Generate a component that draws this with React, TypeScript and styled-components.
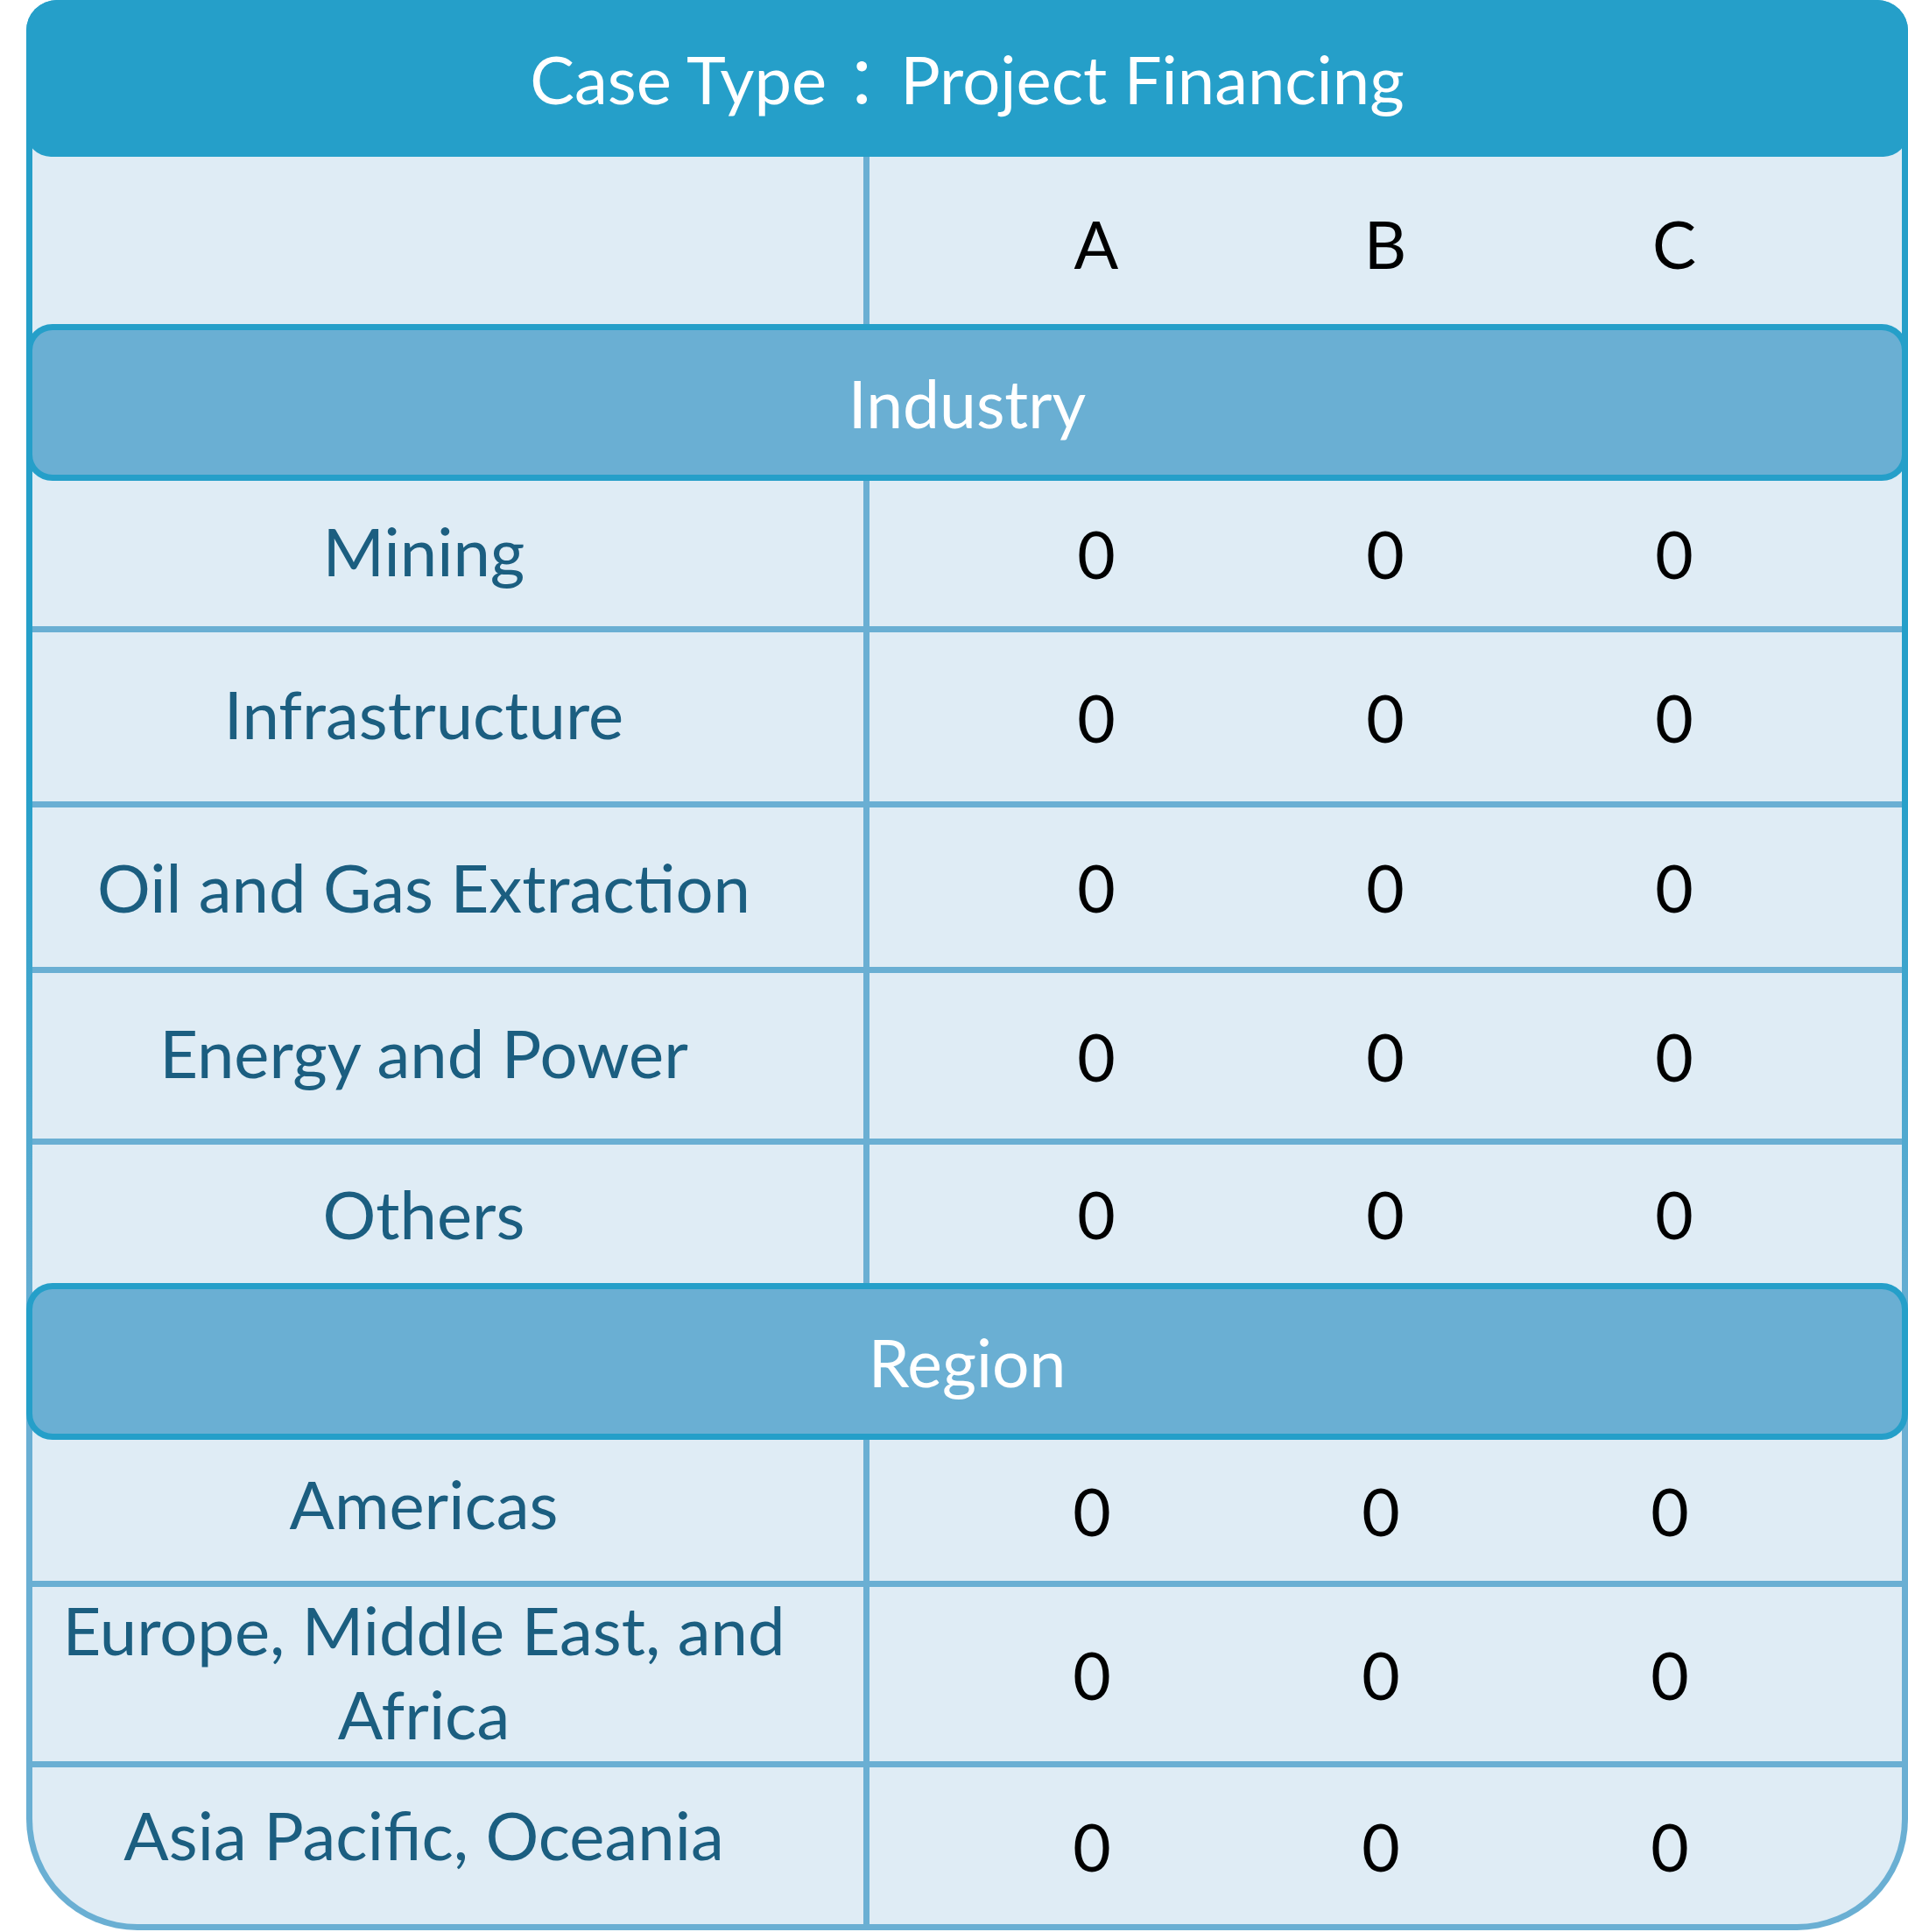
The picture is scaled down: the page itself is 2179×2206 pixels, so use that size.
import React from "react";
import styled, { createGlobalStyle } from "styled-components";

const GlobalStyle = createGlobalStyle`
  html, body {
    margin: 0;
    padding: 0;
    background: #ffffff;
  }
  body {
    font-family: Lato, "Noto Sans CJK SC", "Noto Sans", sans-serif;
  }
  * { box-sizing: border-box; }
`;

const Card = styled.div`
  margin-left: 30px;
  width: 2149px;
  border: 7px solid transparent;
  border-radius: 35px 35px 127px 127px;
  background:
    linear-gradient(#dfecf5, #dfecf5) padding-box,
    linear-gradient(to bottom, #259fc9 0%, #259fc9 40%, #6aafd3 70%, #6aafd3 100%) border-box;
`;

const Header = styled.div`
  margin: -7px -7px 0;
  height: 179px;
  background: #259fc9;
  border-radius: 35px 35px 28px 28px;
  display: flex;
  align-items: center;
  justify-content: center;
  color: #ffffff;
  font-size: 76px;
  white-space: pre;
  position: relative;
  z-index: 1;
`;

const Colon = styled.span`
  font-family: "Noto Sans CJK JP", "Noto Sans CJK SC", sans-serif;
  margin: 0 6px 0 2px;
`;

const Band = styled.div`
  margin: 0 -7px;
  height: 179px;
  border: 7px solid #259fc9;
  border-radius: 30px;
  background: #6aafd3;
  display: flex;
  align-items: center;
  justify-content: center;
  color: #ffffff;
  font-size: 75px;
`;

const Row = styled.div<{ $h: number; $line?: boolean }>`
  display: grid;
  grid-template-columns: 956px 1fr;
  height: ${(p) => p.$h + (p.$line ? 7 : 0)}px;
  border-bottom: ${(p) => (p.$line ? "7px solid #6aafd3" : "none")};
`;

const LabelCell = styled.div<{ $lift?: number }>`
  border-right: 7px solid #6aafd3;
  display: flex;
  align-items: center;
  justify-content: center;
  text-align: center;
  padding: 0 75px ${(p) => 2 * (p.$lift ?? 0)}px 20px;
  color: #1b5e80;
  font-size: 76px;
  line-height: 96px;
`;

const Values = styled.div<{ $shift?: number; $top?: number }>`
  display: grid;
  grid-template-columns: repeat(3, 330px);
  padding-left: ${(p) => 94 - (p.$shift ?? 0)}px;
  padding-top: ${(p) => p.$top ?? 0}px;
  align-items: center;
  justify-items: center;
  color: #000000;
  font-size: 75px;
`;

type Item = { label: string; h: number; line: boolean; lift: number };

const industry: Item[] = [
  { label: "Mining", h: 166, line: true, lift: 3 },
  { label: "Infrastructure", h: 193, line: true, lift: 4 },
  { label: "Oil and Gas Extraction", h: 182, line: true, lift: 0 },
  { label: "Energy and Power", h: 189, line: true, lift: 4 },
  { label: "Others", h: 158, line: false, lift: 0 },
];

const region: Item[] = [
  { label: "Americas", h: 161, line: true, lift: 8 },
  { label: "Europe, Middle East, and Africa", h: 199, line: true, lift: 3 },
  { label: "Asia Pacific, Oceania", h: 179, line: false, lift: 13 },
];

const DataRow: React.FC<{ item: Item; shift?: number }> = ({ item, shift }) => (
  <Row $h={item.h} $line={item.line}>
    <LabelCell $lift={item.lift}>{item.label}</LabelCell>
    <Values $shift={shift}>
      <span>0</span>
      <span>0</span>
      <span>0</span>
    </Values>
  </Row>
);

export default function App() {
  return (
    <>
      <GlobalStyle />
      <Card>
        <Header>
          Case Type<Colon>：</Colon>Project Financing
        </Header>
        <Row $h={191}>
          <LabelCell />
          <Values $top={6}>
            <span>A</span>
            <span>B</span>
            <span>C</span>
          </Values>
        </Row>
        <Band>Industry</Band>
        {industry.map((it) => (
          <DataRow key={it.label} item={it} />
        ))}
        <Band>Region</Band>
        {region.map((it) => (
          <DataRow key={it.label} item={it} shift={5} />
        ))}
      </Card>
    </>
  );
}
